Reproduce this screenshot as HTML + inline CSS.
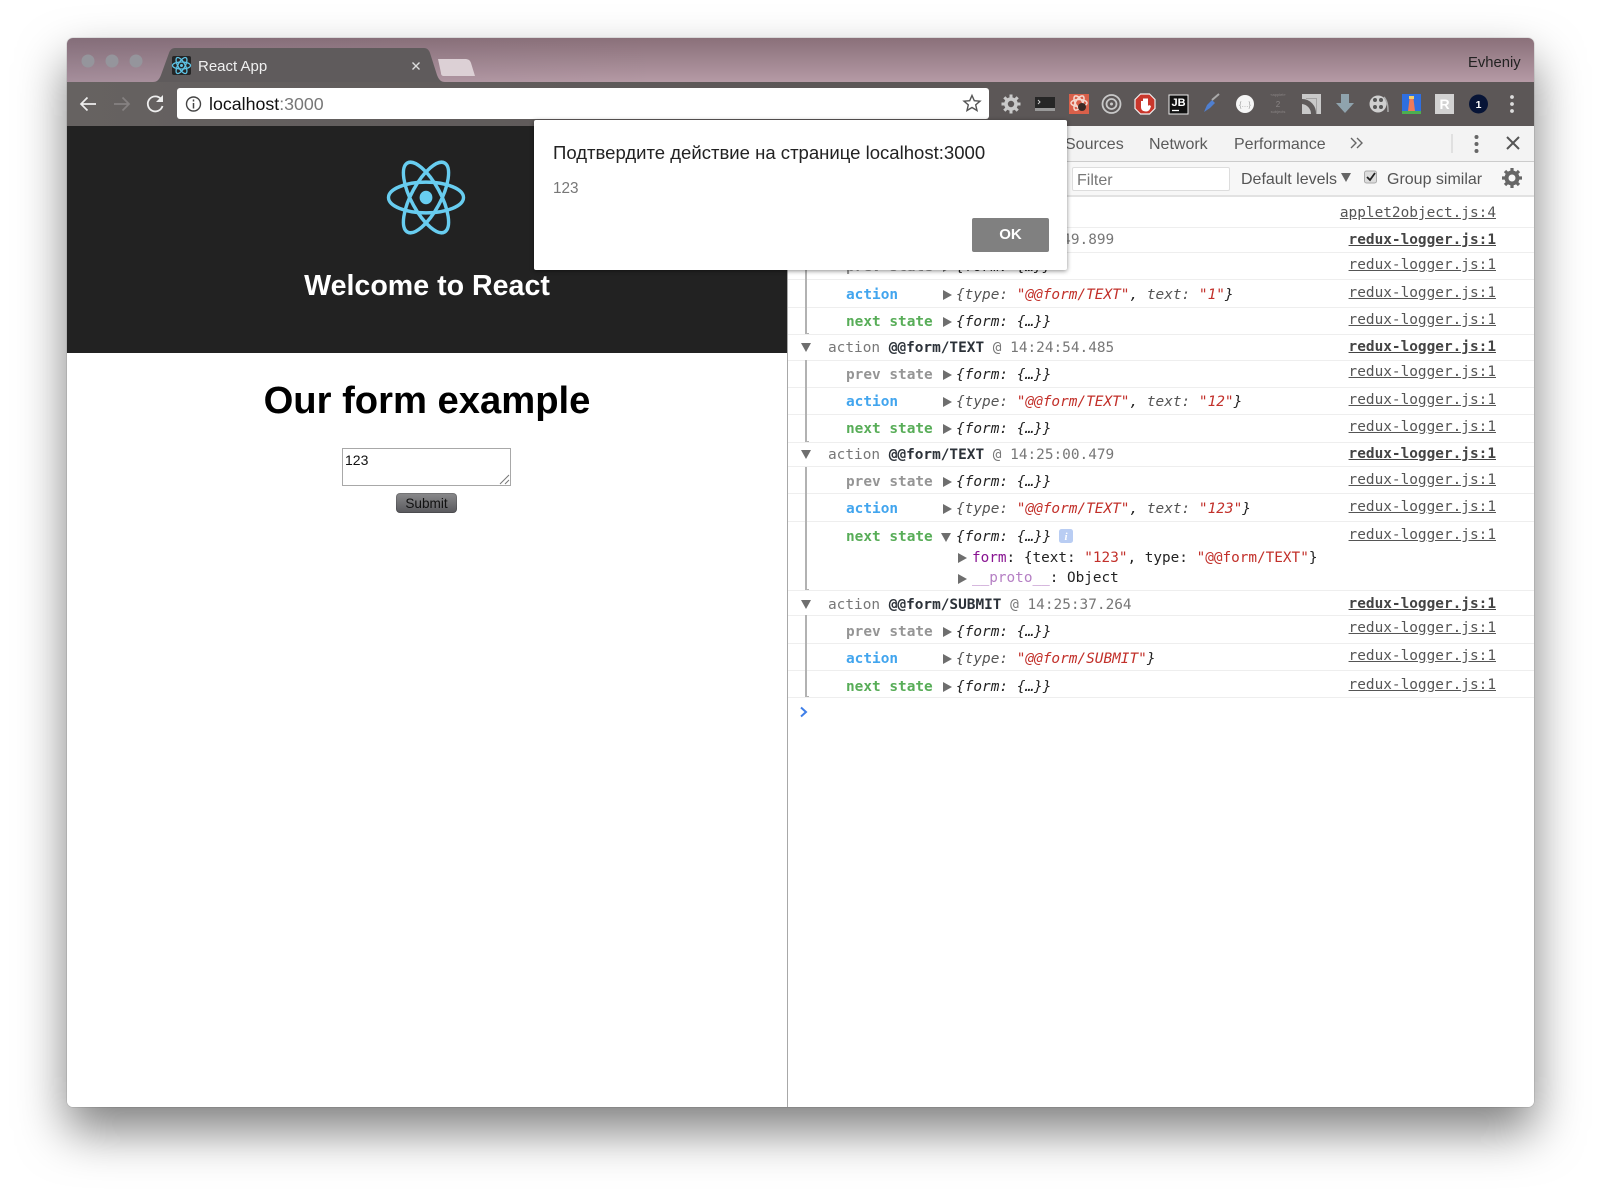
<!DOCTYPE html>
<html><head><meta charset="utf-8"><title>React App</title>
<style>
html,body{margin:0;padding:0;background:#fff;width:1600px;height:1202px;overflow:hidden}
body{position:relative;font-family:"Liberation Sans",sans-serif}
.abs,.t,.s,.l,.arr,.dn{position:absolute}
#win{position:absolute;left:67px;top:38px;width:1467px;height:1069px;border-radius:6px;box-shadow:0 24px 48px rgba(0,0,0,.5),0 0 1px rgba(0,0,0,.5)}
.t,.s{font-family:"DejaVu Sans Mono","Liberation Mono",monospace;font-size:14.42px;line-height:20px;height:20px;white-space:pre;color:#222;margin-top:1px}
.t.n{font-size:14.35px}
.s{right:104px;color:#555;text-decoration:underline}
.s.b{font-weight:bold;color:#444}
.l{left:788px;width:746px;height:1px;background:#eee}
.g{color:#959595;font-weight:bold}.bl{color:#42a5ee;font-weight:bold}.gr{color:#58ad58;font-weight:bold}
.h{color:#777}.h b{color:#2b3138}
.i{font-style:italic}.r{color:#c2302a}
.arr{width:0;height:0;border-left:9px solid #6e6e6e;border-top:5px solid transparent;border-bottom:5px solid transparent;margin-top:1px}
.dn{width:0;height:0;border-top:9px solid #6e6e6e;border-left:5.5px solid transparent;border-right:5.5px solid transparent;margin-top:1px}
.v{position:absolute;left:805px;width:1.5px;background:#b2b2b2}
.v:after{content:"";position:absolute;left:0;bottom:0;width:4px;height:1.5px;background:#b2b2b2}
.tab{position:absolute;top:135px;font-size:16px;line-height:20px;color:#5a5a5a;white-space:pre}
</style></head><body>
<div id="win"></div>

<!-- title bar + toolbar -->
<div class="abs" style="left:67px;top:38px;width:1467px;height:44px;border-radius:6px 6px 0 0;background:linear-gradient(90deg,rgba(110,100,120,.22),rgba(0,0,0,0) 40%),linear-gradient(180deg,#8a7079,#b59aa5)"></div>
<div class="abs" style="left:67px;top:82px;width:1467px;height:44px;background:linear-gradient(90deg,#666261,#5c5757 50%)"></div>

<!-- page -->
<div class="abs" style="left:67px;top:126px;width:720px;height:981px;background:#fff;border-radius:0 0 0 6px"></div>
<div class="abs" style="left:67px;top:126px;width:720px;height:227px;background:#222"></div>
<svg class="abs" style="left:380px;top:155px" width="92" height="86" viewBox="-46 -43 92 86" fill="none" stroke="#68cdf0" stroke-width="3.4">
<g transform="translate(0,-.5) scale(1,1.06)"><ellipse rx="37.5" ry="14.5"/><ellipse rx="37.5" ry="14.5" transform="rotate(60)"/><ellipse rx="37.5" ry="14.5" transform="rotate(120)"/><circle r="6.4" fill="#68cdf0" stroke="none"/></g></svg>
<div class="abs" style="left:67px;top:268px;width:720px;text-align:center;color:#fff;font-weight:bold;font-size:28.6px;line-height:36px">Welcome to React</div>
<div class="abs" style="left:67px;top:377px;width:720px;text-align:center;color:#000;font-weight:bold;font-size:38.2px;line-height:48px">Our form example</div>
<div class="abs" style="left:342px;top:448px;width:169px;height:38px;box-sizing:border-box;border:1.5px solid #a8a8a8;background:#fff;font-size:14px;line-height:16px;color:#111;padding:3px 2px">123
<svg class="abs" style="right:0;bottom:0" width="11" height="11" stroke="#777" stroke-width="1"><path d="M1 10L10 1M6 10L10 6"/></svg></div>
<div class="abs" style="left:396px;top:493px;width:61px;height:20px;border-radius:4px;background:linear-gradient(180deg,#8a8a8c,#58585c);box-shadow:inset 0 0 0 1px rgba(0,0,0,.15);text-align:center;font-size:13.6px;line-height:21px;color:#111">Submit</div>

<!-- devtools -->
<div class="abs" style="left:787px;top:126px;width:747px;height:981px;background:#fff;border-left:1.5px solid #a8a8a8;box-sizing:border-box;border-radius:0 0 6px 0"></div>
<div class="abs" style="left:788px;top:126px;width:746px;height:36px;background:#f3f3f3;border-bottom:1px solid #ccc;box-sizing:border-box"></div>
<div class="abs" style="left:788px;top:162px;width:746px;height:35px;background:#f7f7f7;border-bottom:2px solid #e2e2e2;box-sizing:border-box"></div>
<div class="tab" style="left:1065px">Sources</div>
<div class="tab" style="left:1149px">Network</div>
<div class="tab" style="left:1234px">Performance</div>
<div class="abs" style="left:1072px;top:167px;width:158px;height:24px;box-sizing:border-box;background:#fff;border:1px solid #ddd;border-radius:2px;font-size:16px;line-height:25px;color:#777;padding-left:4px">Filter</div>
<div class="abs" style="left:1241px;top:170px;font-size:16px;line-height:20px;color:#555;white-space:pre">Default levels</div>
<div class="abs" style="left:1387px;top:170px;font-size:16px;line-height:20px;color:#555;white-space:pre">Group similar</div>
<div class="dn" style="left:1341px;top:172px;border-top-color:#666"></div>
<svg class="abs" style="left:1340px;top:126px" width="194" height="72" fill="none">
<path d="M11 12l5 5-5 5M17 12l5 5-5 5" stroke="#666" stroke-width="1.4"/>
<path d="M112 8V27" stroke="#ccc"/>
<circle cx="136.5" cy="11" r="2" fill="#666"/><circle cx="136.5" cy="18" r="2" fill="#666"/><circle cx="136.5" cy="25" r="2" fill="#666"/>
<path d="M167 11l12 12M179 11l-12 12" stroke="#555" stroke-width="2"/>
<rect x="24.5" y="45" width="12" height="12" rx="2" fill="#ddd" stroke="#aaa"/>
<path d="M27 51l3 3 5-7" stroke="#222" stroke-width="1.8"/>
<g transform="translate(172,52)" stroke="#666"><circle r="5.500" stroke-width="4"/><path d="M0-10V-6M0 6V10M-10 0H-6M6 0H10M-7-7L-4.200-4.200M7 7L4.200 4.200M7-7L4.200-4.200M-7 7L-4.200 4.200" stroke-width="3.200"/></g>
</svg>

<!-- console rows -->
<div class="l" style="top:227px"></div><div class="l" style="top:252px"></div><div class="l" style="top:279px"></div><div class="l" style="top:307px"></div><div class="l" style="top:334px"></div><div class="l" style="top:360px"></div><div class="l" style="top:387px"></div><div class="l" style="top:414px"></div><div class="l" style="top:442px"></div><div class="l" style="top:466px"></div><div class="l" style="top:493px"></div><div class="l" style="top:521px"></div><div class="l" style="top:590px"></div><div class="l" style="top:615px"></div><div class="l" style="top:643px"></div><div class="l" style="top:670px"></div><div class="l" style="top:697px"></div>
<div class="v" style="top:252px;height:82px"></div><div class="v" style="top:360px;height:82px"></div><div class="v" style="top:467px;height:123px"></div><div class="v" style="top:615px;height:82px"></div>

<div class="s" style="top:202px">applet2object.js:4</div>
<div class="s b" style="top:229px">redux-logger.js:1</div>
<div class="s" style="top:254px">redux-logger.js:1</div>
<div class="s" style="top:282px">redux-logger.js:1</div>
<div class="s" style="top:309px">redux-logger.js:1</div>
<div class="s b" style="top:336px">redux-logger.js:1</div>
<div class="s" style="top:361px">redux-logger.js:1</div>
<div class="s" style="top:389px">redux-logger.js:1</div>
<div class="s" style="top:416px">redux-logger.js:1</div>
<div class="s b" style="top:443px">redux-logger.js:1</div>
<div class="s" style="top:469px">redux-logger.js:1</div>
<div class="s" style="top:496px">redux-logger.js:1</div>
<div class="s" style="top:524px">redux-logger.js:1</div>
<div class="s b" style="top:593px">redux-logger.js:1</div>
<div class="s" style="top:617px">redux-logger.js:1</div>
<div class="s" style="top:645px">redux-logger.js:1</div>
<div class="s" style="top:674px">redux-logger.js:1</div>

<div class="t h" style="left:828px;top:229px">action <b>@@form/TEXT</b> @ 14:24:49.899</div>

<div class="t g" style="left:846px;top:256px">prev state</div><div class="arr" style="left:943px;top:261px"></div><div class="t i" style="left:956px;top:256px">{form: {…}}</div>
<div class="t bl" style="left:846px;top:284px">action</div><div class="arr" style="left:943px;top:289px"></div><div class="t i" style="left:956px;top:284px"><span style="color:#555">{type: </span><span class="r">"@@form/TEXT"</span>, <span style="color:#555">text: </span><span class="r">"1"</span>}</div>
<div class="t gr" style="left:846px;top:311px">next state</div><div class="arr" style="left:943px;top:316px"></div><div class="t i" style="left:956px;top:311px">{form: {…}}</div>

<div class="dn" style="left:801px;top:342px"></div>
<div class="t h" style="left:828px;top:337px">action <b>@@form/TEXT</b> @ 14:24:54.485</div>
<div class="t g" style="left:846px;top:364px">prev state</div><div class="arr" style="left:943px;top:369px"></div><div class="t i" style="left:956px;top:364px">{form: {…}}</div>
<div class="t bl" style="left:846px;top:391px">action</div><div class="arr" style="left:943px;top:396px"></div><div class="t i" style="left:956px;top:391px"><span style="color:#555">{type: </span><span class="r">"@@form/TEXT"</span>, <span style="color:#555">text: </span><span class="r">"12"</span>}</div>
<div class="t gr" style="left:846px;top:418px">next state</div><div class="arr" style="left:943px;top:423px"></div><div class="t i" style="left:956px;top:418px">{form: {…}}</div>

<div class="dn" style="left:801px;top:449px"></div>
<div class="t h" style="left:828px;top:444px">action <b>@@form/TEXT</b> @ 14:25:00.479</div>
<div class="t g" style="left:846px;top:471px">prev state</div><div class="arr" style="left:943px;top:476px"></div><div class="t i" style="left:956px;top:471px">{form: {…}}</div>
<div class="t bl" style="left:846px;top:498px">action</div><div class="arr" style="left:943px;top:503px"></div><div class="t i" style="left:956px;top:498px"><span style="color:#555">{type: </span><span class="r">"@@form/TEXT"</span>, <span style="color:#555">text: </span><span class="r">"123"</span>}</div>
<div class="t gr" style="left:846px;top:526px">next state</div><div class="dn" style="left:941px;top:532px"></div><div class="t i" style="left:956px;top:526px">{form: {…}}</div>
<svg class="abs" style="left:1059px;top:529px" width="14" height="14"><rect width="14" height="14" rx="2.500" fill="#b9cdf3"/><text x="7" y="11" text-anchor="middle" font-family="Liberation Serif,serif" font-style="italic" font-weight="bold" font-size="11" fill="#fff">i</text></svg>
<div class="arr" style="left:958px;top:552px"></div><div class="t n" style="left:972px;top:547px"><span style="color:#881391">form</span>: {text: <span class="r">"123"</span>, type: <span class="r">"@@form/TEXT"</span>}</div>
<div class="arr" style="left:958px;top:573px"></div><div class="t n" style="left:972px;top:567px"><span style="color:#b57fc4">__proto__</span>: Object</div>

<div class="dn" style="left:801px;top:599px"></div>
<div class="t h" style="left:828px;top:594px">action <b>@@form/SUBMIT</b> @ 14:25:37.264</div>
<div class="t g" style="left:846px;top:621px">prev state</div><div class="arr" style="left:943px;top:626px"></div><div class="t i" style="left:956px;top:621px">{form: {…}}</div>
<div class="t bl" style="left:846px;top:648px">action</div><div class="arr" style="left:943px;top:653px"></div><div class="t i" style="left:956px;top:648px"><span style="color:#555">{type: </span><span class="r">"@@form/SUBMIT"</span>}</div>
<div class="t gr" style="left:846px;top:676px">next state</div><div class="arr" style="left:943px;top:681px"></div><div class="t i" style="left:956px;top:676px">{form: {…}}</div>
<svg class="abs" style="left:799px;top:706px" width="10" height="12" fill="none"><path d="M2 1.500L7 6L2 10.500" stroke="#3f7fe8" stroke-width="2"/></svg>

<!-- browser chrome shapes -->
<svg class="abs" style="left:0;top:0" width="1600" height="130">
<circle cx="88" cy="61" r="6.500" fill="#95959c"/><circle cx="112" cy="61" r="6.500" fill="#95959c"/><circle cx="136" cy="61" r="6.500" fill="#95959c"/>
<path d="M153 82C157 82 159 80 161 75L169 53C170 50 172 48 175 48H424C427 48 429 50 430 53L437 75C439 80 441 82 445 82Z" fill="#5f5b5c"/>
<path d="M438 59H465C468 59 470 60 471 63L475 76H444C442 76 441 75 441 73Z" fill="#dcd0d5"/>
<rect x="172" y="56" width="19" height="19" rx="2" fill="#252525"/>
<g transform="translate(181.500,65.500)" fill="none" stroke="#5ec4e6" stroke-width="1.300"><ellipse rx="9" ry="3.500"/><ellipse rx="9" ry="3.500" transform="rotate(60)"/><ellipse rx="9" ry="3.500" transform="rotate(120)"/><circle r="1.500" fill="#5ec4e6" stroke="none"/></g>
<path d="M412.500 62.500l7 7M419.500 62.500l-7 7" stroke="#ddd" stroke-width="1.400"/>
<path d="M81 104H96M87.500 97.500l-6.500 6.500 6.500 6.500" fill="none" stroke="#eee" stroke-width="1.700"/>
<path d="M114 104H129M122.500 97.500l6.500 6.500-6.500 6.500" fill="none" stroke="#858181" stroke-width="1.700"/>
<path d="M161 99A7.500 7.500 0 1 0 162.500 106" fill="none" stroke="#eee" stroke-width="1.800"/><path d="M163 95V102H156Z" fill="#eee"/>
<rect x="177" y="88" width="812" height="31" rx="3" fill="#fff"/>
<circle cx="193.500" cy="104" r="7" fill="none" stroke="#444" stroke-width="1.400"/><path d="M193.500 103V108.500M193.500 99.500V101.500" stroke="#444" stroke-width="1.500"/>
<path d="M972 95.500l2.300 5.200 5.700.5-4.300 3.700 1.300 5.600-5-3-5 3 1.300-5.600-4.300-3.700 5.700-.5z" fill="none" stroke="#555" stroke-width="1.400"/>
<!-- extensions -->
<g transform="translate(1011,104)" stroke="#c9c9c9" fill="none"><circle r="5" stroke-width="3.600"/><path d="M0-9.500V-5.500M0 5.500V9.500M-9.500 0H-5.500M5.500 0H9.500M-6.700-6.700L-3.900-3.900M6.700 6.700L3.900 3.900M6.700-6.700L3.900-3.900M-6.700 6.700L-3.900 3.900" stroke-width="3"/></g>
<rect x="1035" y="97" width="20" height="14" fill="#262626"/><rect x="1035" y="108" width="20" height="3" fill="#999"/><path d="M1038 100l2 2-2 2" stroke="#ccc" fill="none"/>
<rect x="1069" y="94" width="20" height="20" fill="#d9604a"/><g transform="translate(1079,103)" fill="none" stroke="#f5d9d0" stroke-width="1.500"><ellipse rx="8" ry="3.500"/><ellipse rx="8" ry="3.500" transform="rotate(60)"/><ellipse rx="8" ry="3.500" transform="rotate(120)"/></g><circle cx="1082" cy="107" r="4" fill="#3a2a26"/>
<g fill="none" stroke="#c8c8c8"><circle cx="1111.500" cy="104" r="9" stroke-width="1.800"/><circle cx="1111.500" cy="104" r="5" stroke-width="1.800"/></g><circle cx="1111.500" cy="104" r="1.500" fill="#c8c8c8"/>
<path d="M1140.500 94H1149.500L1155 99.500V108.500L1149.500 114H1140.500L1135 108.500V99.500Z" fill="#c9372c" stroke="#eee" stroke-width="1.200"/><path d="M1141 101V107C1141 110 1143 111.500 1146 111.500C1149 111.500 1150 109.500 1151 106L1149 105L1148 106V98.500H1146.500V98.500H1143V101Z" fill="#fff"/>
<rect x="1169" y="95" width="19" height="19" fill="#111" stroke="#eee"/><text x="1178.500" y="106" text-anchor="middle" font-family="Liberation Sans,sans-serif" font-weight="bold" font-size="11" fill="#fff">JB</text><path d="M1172 110.500h7" stroke="#fff" stroke-width="1.300"/>
<path d="M1204 112L1207 105L1212 100L1215 103L1210 108Z" fill="#4f7fd0"/><path d="M1212 100L1219 94" stroke="#aaa" stroke-width="2"/>
<circle cx="1245" cy="104" r="9" fill="#f6f6f6"/><text x="1245" y="107" text-anchor="middle" font-family="Liberation Sans,sans-serif" font-size="7" fill="#999">{…}</text>
<text x="1278" y="96" text-anchor="middle" font-family="Liberation Sans,sans-serif" font-size="4" fill="#8a8585">«applet»</text><text x="1278" y="107" text-anchor="middle" font-family="Liberation Sans,sans-serif" font-size="8" fill="#8a8585">2</text><text x="1278" y="113" text-anchor="middle" font-family="Liberation Sans,sans-serif" font-size="4" fill="#8a8585">subjects</text>
<rect x="1302" y="94" width="19" height="20" fill="#c9c9c9"/><path d="M1302 99A14 14 0 0 1 1316 114H1311A10 10 0 0 0 1302 104Z" fill="#5f5b5b"/><path d="M1306 98H1317V114H1316V99H1306Z" fill="#5f5b5b" opacity=".35"/>
<path d="M1341 94H1349V103H1354L1345 113L1336 103H1341Z" fill="#8fa3ad"/>
<circle cx="1378" cy="104" r="8.500" fill="#cfcfcf"/><circle cx="1375" cy="100" r="2" fill="#555"/><circle cx="1381" cy="100" r="2" fill="#555"/><circle cx="1375" cy="107" r="2" fill="#555"/><circle cx="1381" cy="107" r="2" fill="#555"/><path d="M1384 97C1388 102 1388 108 1388 112" stroke="#aaa" stroke-width="1.500" fill="none"/>
<rect x="1402" y="94" width="19" height="20" fill="#2f6fe0"/><rect x="1402" y="111" width="19" height="3" fill="#4caf50"/><path d="M1409.500 99H1413.500L1415 111H1408Z" fill="#ee7a5a"/><rect x="1409" y="96" width="5" height="3" fill="#f3d06a"/>
<rect x="1435" y="94" width="19" height="20" fill="#d2d2d2"/><text x="1444.500" y="109" text-anchor="middle" font-family="Liberation Sans,sans-serif" font-weight="bold" font-size="14" fill="#fff">R</text>
<circle cx="1478.500" cy="104" r="9.500" fill="#071436"/><text x="1478.500" y="108" text-anchor="middle" font-family="Liberation Sans,sans-serif" font-weight="bold" font-size="10.500" fill="#fff">1</text>
<circle cx="1512" cy="97" r="1.900" fill="#ddd"/><circle cx="1512" cy="104" r="1.900" fill="#ddd"/><circle cx="1512" cy="111" r="1.900" fill="#ddd"/>
</svg>
<div class="abs" style="left:198px;top:56.500px;font-size:15px;line-height:20px;color:#f0f0f0;white-space:pre">React App</div>
<div class="abs" style="left:209px;top:93px;font-size:17.800px;line-height:22px;color:#111;white-space:pre">localhost<span style="color:#777">:3000</span></div>
<div class="abs" style="left:1468px;top:54px;font-size:14.800px;line-height:18px;color:#222;white-space:pre">Evheniy</div>

<!-- dialog -->
<div class="abs" style="left:534px;top:120px;width:533px;height:150px;background:#fff;border-radius:2px;box-shadow:0 1px 5px rgba(0,0,0,.45)">
<div class="abs" style="left:19px;top:20.500px;font-size:18.550px;line-height:24px;color:#222;white-space:pre;font-family:'Liberation Sans','Noto Sans CJK SC',sans-serif">Подтвердите действие на странице localhost:3000</div>
<div class="abs" style="left:19px;top:59px;font-size:15.300px;line-height:20px;color:#777">123</div>
<div class="abs" style="left:438px;top:98px;width:77px;height:34px;background:#808080;border-radius:2px;color:#fff;font-weight:bold;font-size:15px;line-height:34px;text-align:center">OK</div>
</div>
</body></html>
